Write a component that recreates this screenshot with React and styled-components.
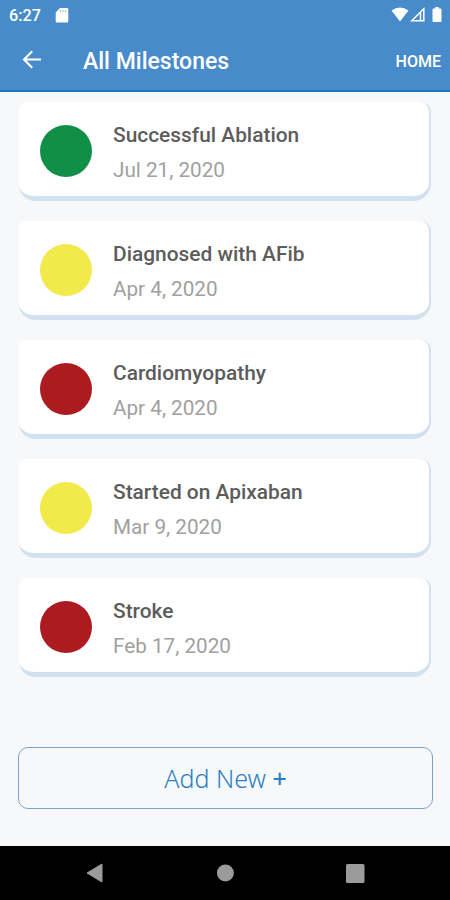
import styled, { createGlobalStyle } from "styled-components";

const GlobalStyle = createGlobalStyle`
  * {
    box-sizing: border-box;
  }
  body {
    margin: 0;
    font-family: Roboto, "Liberation Sans", sans-serif;
  }
  svg {
    display: block;
  }
`;

const Container = styled.div`
  width: 100%;
  height: 900px;
  display: flex;
  flex-direction: column;
  background-color: #f6f8fa;
  overflow: hidden;
`;

const Header = styled.header`
  height: 92px;
  flex-shrink: 0;
  background-color: #488bca;
  border-bottom: 2px solid #187bc1;
  color: white;
`;

const StatusBar = styled.div`
  height: 30px;
  padding: 0 7px 0 9px;
  display: flex;
  align-items: center;
`;

const Clock = styled.span`
  width: 46px;
  padding-top: 1px;
  font-size: 16.2px;
  font-weight: 500;
  line-height: 29px;
`;

const StatusIcons = styled.div`
  margin-left: auto;
  display: flex;
  align-items: center;
`;

const TitleBar = styled.div`
  height: 60px;
  padding: 0 9px 0 20px;
  display: flex;
  align-items: center;
`;

const BackButton = styled.button`
  width: 63px;
  padding: 0 0 1px;
  border: none;
  background: none;
  color: white;
  cursor: pointer;
`;

const Title = styled.h1`
  margin: 4px 0 0;
  font-size: 23px;
  font-weight: 500;
  line-height: 30px;
`;

const HomeLink = styled.span`
  margin: 3px 0 0 auto;
  font-size: 16px;
  font-weight: 500;
  line-height: 20px;
  cursor: pointer;
`;

const List = styled.main`
  padding: 10px 19px 0;
  display: flex;
  flex-direction: column;
  gap: 20px;
`;

const Card = styled.div`
  height: 99.1px;
  padding: 0 0 0 21px;
  display: flex;
  align-items: center;
  background-color: white;
  border-right: 2.5px solid #d2e1ef;
  border-bottom: 5px solid #d2e1ef;
  border-radius: 8px 10px 18px 16px;
`;

const Dot = styled.div`
  width: 52px;
  height: 52px;
  margin: 4px 21px 0 0;
  border-radius: 50%;
  background-color: ${(props) => props.$color};
`;

const Name = styled.div`
  margin-top: 8px;
  font-size: 20.9px;
  font-weight: 500;
  line-height: 35px;
  color: #5c5c5c;
`;

const DateText = styled.div`
  font-size: 20.7px;
  font-weight: 400;
  line-height: 35px;
  color: #a0a0a0;
`;

const AddButton = styled.button`
  height: 62px;
  margin: 69.5px 17px 0 18px;
  padding: 0;
  border: 1.5px solid #79a3d1;
  border-radius: 10px;
  background: none;
  font-family: "Noto Sans", sans-serif;
  font-size: 25px;
  font-weight: 300;
  color: #2b7fc3;
  cursor: pointer;
`;

const Plus = styled.span`
  font-weight: 500;
`;

const NavBar = styled.nav`
  height: 54px;
  margin-top: auto;
  padding: 0 85px;
  flex-shrink: 0;
  display: flex;
  align-items: center;
  justify-content: space-between;
  background-color: black;
`;

const milestones = [
  { name: "Successful Ablation", date: "Jul 21, 2020", color: "#118f49" },
  { name: "Diagnosed with AFib", date: "Apr 4, 2020", color: "#f2e94b" },
  { name: "Cardiomyopathy", date: "Apr 4, 2020", color: "#ab1b20" },
  { name: "Started on Apixaban", date: "Mar 9, 2020", color: "#f2e94b" },
  { name: "Stroke", date: "Feb 17, 2020", color: "#ab1b20" },
];

function App() {
  return (
    <Container>
      <GlobalStyle />
      <Header>
        <StatusBar>
          <Clock>6:27</Clock>
          <svg width="14" height="15" viewBox="0 0 14 15">
            <path
              d="M5 0h7a1.3 1.3 0 0 1 1.3 1.3v12A1.3 1.3 0 0 1 12 14.6H2A1.3 1.3 0 0 1 .7 13.3V4.6z"
              fill="white"
            />
            <path
              d="M5.3 2v2.2M7.9 2v2.2M10.5 2v2.2"
              stroke="#488bca"
              strokeOpacity="0.6"
            />
          </svg>
          <StatusIcons>
            <svg width="52" height="16" viewBox="0 0 52 16">
              <path d="M.5 3.5Q9-2.5 17.5 3.5L9 14.5z" fill="white" />
              <path
                d="M20.8 13.8L32.8 1.8v12zM29.5 5.5v8"
                fill="none"
                stroke="white"
                strokeWidth="1.5"
              />
              <path
                d="M44.2 0h3.6v1.5h1.8a.9.9 0 0 1 .9.9v11.7a.9.9 0 0 1-.9.9h-7.2a.9.9 0 0 1-.9-.9V2.4a.9.9 0 0 1 .9-.9h1.8z"
                fill="white"
              />
            </svg>
          </StatusIcons>
        </StatusBar>
        <TitleBar>
          <BackButton aria-label="Back">
            <svg width="24" height="20" viewBox="0 0 24 20">
              <path
                d="M21 9.5H4.2M12.2 1.3L4 9.5l8.2 8.2"
                fill="none"
                stroke="white"
                strokeWidth="2.1"
              />
            </svg>
          </BackButton>
          <Title>All Milestones</Title>
          <HomeLink>HOME</HomeLink>
        </TitleBar>
      </Header>

      <List>
        {milestones.map((item) => (
          <Card key={item.name}>
            <Dot $color={item.color} />
            <div>
              <Name>{item.name}</Name>
              <DateText>{item.date}</DateText>
            </div>
          </Card>
        ))}
      </List>

      <AddButton>
        Add New <Plus>+</Plus>
      </AddButton>

      <NavBar>
        <svg width="19" height="20" viewBox="0 0 19 20">
          <path
            d="M17 1L2 10l15 9z"
            fill="#9b9b9b"
            stroke="#9b9b9b"
            strokeLinejoin="round"
          />
        </svg>
        <svg width="18" height="18" viewBox="0 0 18 18">
          <circle cx="9.4" cy="9" r="8.5" fill="#9b9b9b" />
        </svg>
        <svg width="19" height="19" viewBox="0 0 19 19">
          <rect width="18.5" height="19" rx="1.5" fill="#9b9b9b" />
        </svg>
      </NavBar>
    </Container>
  );
}

export default App;
